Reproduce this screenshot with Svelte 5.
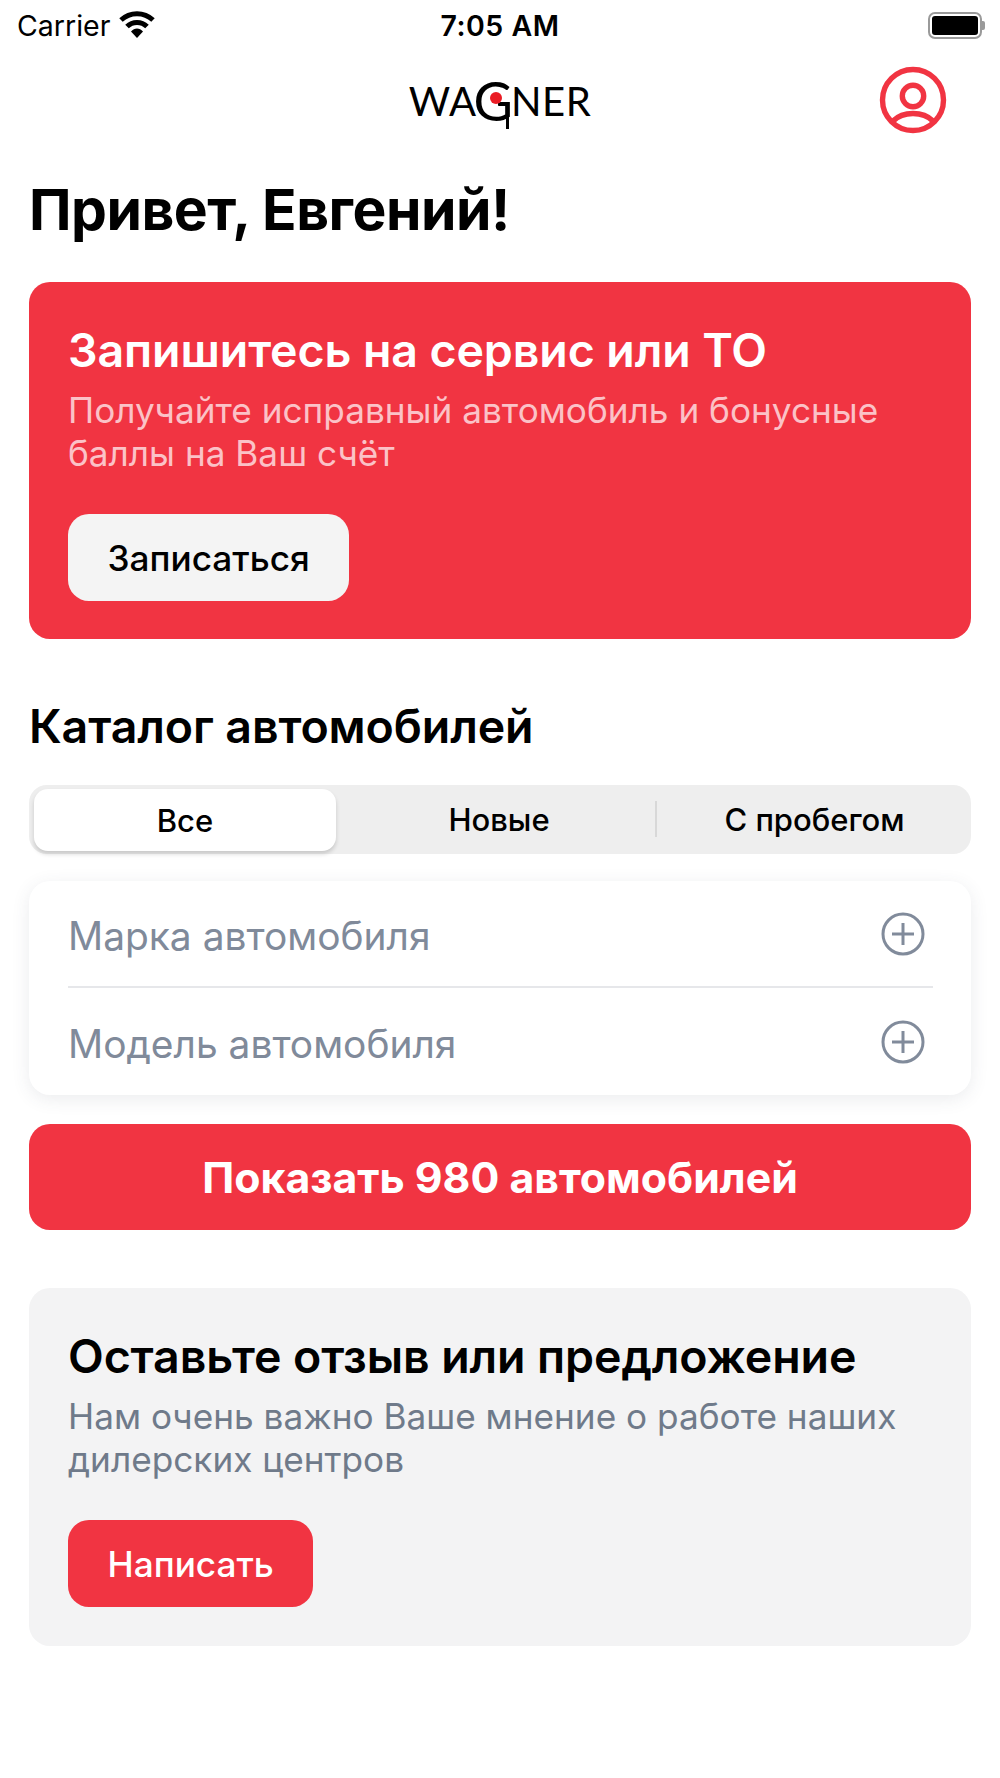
<script>
  const tabs = ['Все', 'Новые', 'С пробегом'];
  const fields = ['Марка автомобиля', 'Модель автомобиля'];
</script>

<div class="page">
  <div class="status">
    <div class="st-left">
      <span class="carrier">Carrier</span>
      <svg class="wifi" width="36" height="28" viewBox="0 0 36 28">
        <path d="M2 10C11 1.5 25 1.5 34 10" fill="none" stroke="#000" stroke-width="5"/>
        <path d="M8 16.5C13.5 11 22.5 11 28 16.5" fill="none" stroke="#000" stroke-width="5"/>
        <path d="M12 21.5C15.5 17.5 20.5 17.5 24 21.5L18 28Z" fill="#000"/>
      </svg>
    </div>
    <span class="time">7:05 AM</span>
    <div class="battery"><div class="cell"></div><div class="nub"></div></div>
  </div>

  <header class="nav">
    <div class="logo">
      <span class="wa">WA</span><span class="g">G</span><span class="wa">NER</span>
      <span class="tail"></span>
      <span class="dot"></span>
    </div>
    <svg class="user" width="68" height="68" viewBox="0 0 68 68" fill="none" stroke="#f13442" stroke-width="5.4">
      <circle cx="34" cy="34" r="30.5"/>
      <circle cx="34" cy="30" r="10.7"/>
      <path d="M14 55C24 45 44 45 54 55"/>
    </svg>
  </header>

  <main class="content">
    <h1>Привет, Евгений!</h1>

    <section class="card hero">
      <h2>Запишитесь на сервис или ТО</h2>
      <p>Получайте исправный автомобиль и бонусные баллы на Ваш счёт</p>
      <button class="btn light">Записаться</button>
    </section>

    <h3>Каталог автомобилей</h3>

    <div class="seg">
      {#each tabs as t, i}
        <div class="tab" class:active={i === 0} class:sep={i === 2} class:plain={i > 0}>{t}</div>
      {/each}
    </div>

    <div class="fields">
      {#each fields as f}
        <div class="field">
          <span>{f}</span>
          <svg width="44" height="44" viewBox="0 0 44 44" fill="none" stroke="#818b9b" stroke-width="3">
            <circle cx="22" cy="22" r="20"/>
            <path d="M22 11V33M11 22H33"/>
          </svg>
        </div>
      {/each}
    </div>

    <button class="cta">Показать 980 автомобилей</button>

    <section class="card feedback">
      <h2>Оставьте отзыв или предложение</h2>
      <p>Нам очень важно Ваше мнение о работе наших дилерских центров</p>
      <button class="btn red">Написать</button>
    </section>
  </main>
</div>

<style>
  :global(body) { margin: 0; background: #fff; }
  .page { width: 1000px; height: 1778px; overflow: hidden; font-family: Inter, "Noto Sans", sans-serif; color: #000; }
  .status { height: 50px; position: relative; display: flex; align-items: center; justify-content: space-between; padding: 0 15px 0 17px; }
  .st-left { display: flex; align-items: center; gap: 9px; }
  .carrier { font-size: 28.5px; }
  .wifi { margin-top: -3px; }
  .time { position: absolute; left: 0; right: 0; text-align: center; font-size: 28.5px; font-weight: 600; letter-spacing: .5px; }
  .battery { display: flex; align-items: center; }
  .cell { width: 46px; height: 19px; background: #000; border-radius: 5px; border: 2px solid #fff; outline: 2px solid #9a9a9a; }
  .nub { width: 3px; height: 9px; background: #9a9a9a; border-radius: 0 2px 2px 0; margin-left: 2px; }
  .nav { height: 102px; position: relative; display: flex; align-items: center; justify-content: center; }
  .logo { position: relative; margin-top: -5px; display: flex; align-items: baseline; font-family: Lato, sans-serif; line-height: 1; }
  .wa { font-size: 40px; font-weight: 400; letter-spacing: .5px; }
  .g { font-size: 54px; font-weight: 400; margin: 0 -2px 0 -3px; line-height: 38px; transform: translateY(5px); }
  .tail { position: absolute; left: 97px; top: 32px; width: 3px; height: 20px; background: #000; }
  .dot { position: absolute; left: 81px; top: 15px; width: 12px; height: 12px; border-radius: 50%; background: #ea1c24; }
  .user { position: absolute; left: 879px; top: 16px; }
  .content { padding: 0 29px; }
  h1 { margin: 26px 0 0; font-size: 57px; line-height: 64px; font-weight: 700; letter-spacing: -.5px; }
  .card { border-radius: 21px; padding: 40px 39px 39px; }
  .hero { margin-top: 40px; background: #f13442; color: #fff; height: 357px; box-sizing: border-box; }
  h2 { margin: 0; font-size: 46.5px; line-height: 56px; font-weight: 600; letter-spacing: -.1px; }
  .card p { margin: 11px 0 0; font-size: 35.2px; line-height: 43px; }
  .hero p { color: #fbc2c7; }
  .feedback p { color: #6f7a8a; }
  .btn { display: block; margin-top: 39px; height: 87px; border: 0; border-radius: 21px; font: 500 35.2px Inter, sans-serif; padding: 0 39.5px; }
  .light { background: #f4f4f4; color: #000; }
  .red { background: #f13442; color: #fff; }
  h3 { margin: 60px 0 0; font-size: 46.5px; line-height: 54px; font-weight: 600; letter-spacing: -.1px; }
  .seg { margin-top: 32px; height: 69px; box-sizing: border-box; background: #eeeeee; border-radius: 18px; display: grid; grid-template-columns: 303px 319px 1fr; padding: 4px; font-size: 31px; font-weight: 500; }
  .tab { display: flex; align-items: center; justify-content: center; position: relative; }
  .plain { padding-left: 7px; }
  .active { background: #fff; border-radius: 14px; margin: 0 0 -1px 1px; box-shadow: 0 3px 4px rgba(0,0,0,.16); }
  .sep::before { content: ""; position: absolute; left: 0; top: 12px; bottom: 13px; width: 2px; background: #d8d8d8; }
  .fields { margin-top: 27px; height: 214px; background: #fff; border-radius: 21px; box-shadow: 0 4px 18px rgba(60,70,90,.1); padding: 0 38px 0 39px; }
  .field { height: 107px; box-sizing: border-box; display: flex; align-items: center; justify-content: space-between; padding-right: 8px; font-size: 38.9px; color: #808a9a; }
  .field span { padding-top: 3px; }
  .field:first-child { border-bottom: 2px solid #e6e7ea; }
  .cta { display: block; width: 100%; margin-top: 29px; height: 106px; border: 0; border-radius: 21px; background: #f13442; color: #fff; font: 700 42.8px Inter, sans-serif; }
  .feedback { margin-top: 58px; background: #f3f3f4; height: 358px; box-sizing: border-box; }
</style>
